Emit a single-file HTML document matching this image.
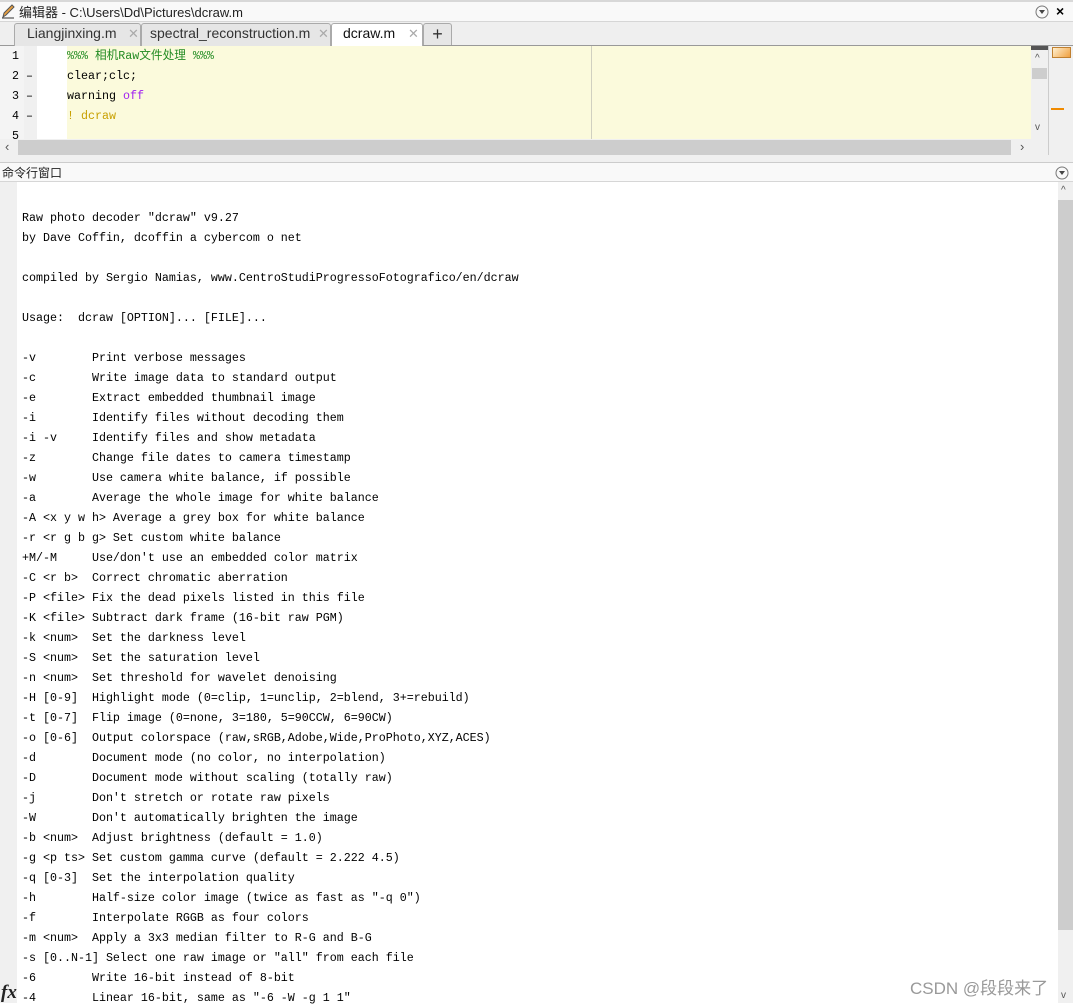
<!DOCTYPE html>
<html><head><meta charset="utf-8"><style>
*{margin:0;padding:0;box-sizing:border-box}
body{width:1073px;height:1003px;overflow:hidden;background:#fff;font-family:"Liberation Sans","Noto Sans CJK SC",sans-serif;position:relative}
.abs{position:absolute}
pre{font-family:"Liberation Mono","Noto Sans CJK SC",monospace;font-size:11.67px;line-height:20px;color:#000}
</style></head><body>
<div class="abs" style="left:0;top:0;width:1073px;height:22px;background:#f9f9f9;border-top:2px solid #d8d8d8;border-bottom:1px solid #d6d6d6"></div>
<svg class="abs" style="left:1px;top:4px" width="14" height="15"><path d="M2 13 L3 9 L11 1 L13 3 L5 11 Z" fill="#e8a040" stroke="#555" stroke-width="1"/><path d="M1 14h12" stroke="#333"/></svg>
<div class="abs" style="left:19px;top:2px;font-size:13px;color:#222">编辑器 - C:\Users\Dd\Pictures\dcraw.m</div>
<svg class="abs" style="left:1035px;top:5px" width="14" height="14"><circle cx="7" cy="7" r="6" fill="none" stroke="#777"/><path d="M4 5h6l-3 4z" fill="#444"/></svg>
<div class="abs" style="left:1056px;top:3px;font-size:14px;font-weight:bold;color:#000">×</div>
<div class="abs" style="left:0;top:22px;width:1073px;height:24px;background:#efefef;border-bottom:1px solid #999"></div>
<div class="abs" style="left:14px;top:23px;width:127px;height:23px;background:#e6e6e6;border:1px solid #aaa;border-bottom:none;border-radius:3px 3px 0 0"></div>
<div class="abs" style="left:27px;top:25px;font-size:14px;color:#333">Liangjinxing.m</div>
<div class="abs" style="left:128px;top:26px;font-size:13px;color:#aaa">✕</div>
<div class="abs" style="left:141px;top:23px;width:190px;height:23px;background:#e6e6e6;border:1px solid #aaa;border-bottom:none;border-radius:3px 3px 0 0"></div>
<div class="abs" style="left:150px;top:25px;font-size:14px;color:#333">spectral_reconstruction.m</div>
<div class="abs" style="left:318px;top:26px;font-size:13px;color:#aaa">✕</div>
<div class="abs" style="left:331px;top:23px;width:92px;height:24px;background:#fff;border:1px solid #aaa;border-bottom:none;border-radius:3px 3px 0 0"></div>
<div class="abs" style="left:343px;top:25px;font-size:14px;color:#111">dcraw.m</div>
<div class="abs" style="left:408px;top:26px;font-size:13px;color:#aaa">✕</div>
<div class="abs" style="left:423px;top:23px;width:29px;height:22px;background:#e6e6e6;border:1px solid #aaa;border-bottom:none;border-radius:3px 3px 0 0;font-size:18px;text-align:center;line-height:20px;color:#333">+</div>
<div class="abs" style="left:0;top:46px;width:37px;height:93px;background:#f4f4f4"></div>
<div class="abs" style="left:24px;top:46px;width:13px;height:93px;background:#f0f0f0"></div>
<div class="abs" style="left:37px;top:46px;width:30px;height:93px;background:#fff"></div>
<div class="abs" style="left:67px;top:46px;width:964px;height:93px;background:#fbfadc"></div>
<div class="abs" style="left:591px;top:46px;width:1px;height:93px;background:#d0d0c0"></div>
<pre class="abs" style="left:12px;top:46px">1
2 –
3 –
4 –
5</pre>
<pre class="abs" style="left:67px;top:46px"><span style="color:#228b22">%%% 相机Raw文件处理 %%%</span>
clear;clc;
warning <span style="color:#a020f0">off</span>
<span style="color:#c8a000">! dcraw</span></pre>
<div class="abs" style="left:1031px;top:46px;width:17px;height:93px;background:#f0f0f0"></div>
<div class="abs" style="left:1031px;top:46px;width:17px;height:4px;background:#555"></div>
<div class="abs" style="left:1032px;top:68px;width:15px;height:11px;background:#cdcdcd"></div>
<div class="abs" style="left:1035px;top:53px;font-size:10px;color:#555">^</div>
<div class="abs" style="left:1035px;top:122px;font-size:10px;color:#555">v</div>
<div class="abs" style="left:1048px;top:46px;width:25px;height:110px;background:#f0f0f0;border-left:1px solid #ccc"></div>
<div class="abs" style="left:1052px;top:47px;width:19px;height:11px;background:linear-gradient(135deg,#fff0d0,#f0a040);border:1px solid #c08030"></div>
<div class="abs" style="left:1051px;top:108px;width:13px;height:2px;background:#f08a00"></div>
<div class="abs" style="left:0;top:139px;width:1048px;height:16px;background:#f0f0f0"></div>
<div class="abs" style="left:18px;top:140px;width:993px;height:15px;background:#cdcdcd"></div>
<div class="abs" style="left:5px;top:139px;font-size:13px;color:#555">‹</div>
<div class="abs" style="left:1020px;top:139px;font-size:13px;color:#555">›</div>
<div class="abs" style="left:0;top:155px;width:1073px;height:8px;background:#f0f0f0;border-bottom:1px solid #ccc"></div>
<div class="abs" style="left:0;top:163px;width:1073px;height:19px;background:#f9f9f9;border-bottom:1px solid #d6d6d6"></div>
<div class="abs" style="left:2px;top:164px;font-size:12px;color:#222">命令行窗口</div>
<svg class="abs" style="left:1055px;top:166px" width="14" height="14"><circle cx="7" cy="7" r="6" fill="none" stroke="#777"/><path d="M4 5h6l-3 4z" fill="#444"/></svg>
<div class="abs" style="left:0;top:182px;width:17px;height:821px;background:#f0f0f0"></div>
<div class="abs" style="left:1058px;top:182px;width:15px;height:821px;background:#f0f0f0"></div>
<div class="abs" style="left:1058px;top:200px;width:15px;height:730px;background:#cdcdcd"></div>
<div class="abs" style="left:1061px;top:185px;font-size:10px;color:#555">^</div>
<div class="abs" style="left:1061px;top:990px;font-size:10px;color:#555">v</div>
<pre class="abs" style="left:22px;top:208px">Raw photo decoder "dcraw" v9.27
by Dave Coffin, dcoffin a cybercom o net

compiled by Sergio Namias, www.CentroStudiProgressoFotografico/en/dcraw

Usage:  dcraw [OPTION]... [FILE]...

-v        Print verbose messages
-c        Write image data to standard output
-e        Extract embedded thumbnail image
-i        Identify files without decoding them
-i -v     Identify files and show metadata
-z        Change file dates to camera timestamp
-w        Use camera white balance, if possible
-a        Average the whole image for white balance
-A &lt;x y w h&gt; Average a grey box for white balance
-r &lt;r g b g&gt; Set custom white balance
+M/-M     Use/don't use an embedded color matrix
-C &lt;r b&gt;  Correct chromatic aberration
-P &lt;file&gt; Fix the dead pixels listed in this file
-K &lt;file&gt; Subtract dark frame (16-bit raw PGM)
-k &lt;num&gt;  Set the darkness level
-S &lt;num&gt;  Set the saturation level
-n &lt;num&gt;  Set threshold for wavelet denoising
-H [0-9]  Highlight mode (0=clip, 1=unclip, 2=blend, 3+=rebuild)
-t [0-7]  Flip image (0=none, 3=180, 5=90CCW, 6=90CW)
-o [0-6]  Output colorspace (raw,sRGB,Adobe,Wide,ProPhoto,XYZ,ACES)
-d        Document mode (no color, no interpolation)
-D        Document mode without scaling (totally raw)
-j        Don't stretch or rotate raw pixels
-W        Don't automatically brighten the image
-b &lt;num&gt;  Adjust brightness (default = 1.0)
-g &lt;p ts&gt; Set custom gamma curve (default = 2.222 4.5)
-q [0-3]  Set the interpolation quality
-h        Half-size color image (twice as fast as "-q 0")
-f        Interpolate RGGB as four colors
-m &lt;num&gt;  Apply a 3x3 median filter to R-G and B-G
-s [0..N-1] Select one raw image or "all" from each file
-6        Write 16-bit instead of 8-bit
-4        Linear 16-bit, same as "-6 -W -g 1 1"</pre>
<div class="abs" style="left:1px;top:982px;font-family:'Liberation Serif',serif;font-style:italic;font-weight:bold;font-size:19px;color:#222">fx</div>
<div class="abs" style="left:910px;top:974px;font-size:17px;color:#999">CSDN @段段来了</div>
</body></html>
